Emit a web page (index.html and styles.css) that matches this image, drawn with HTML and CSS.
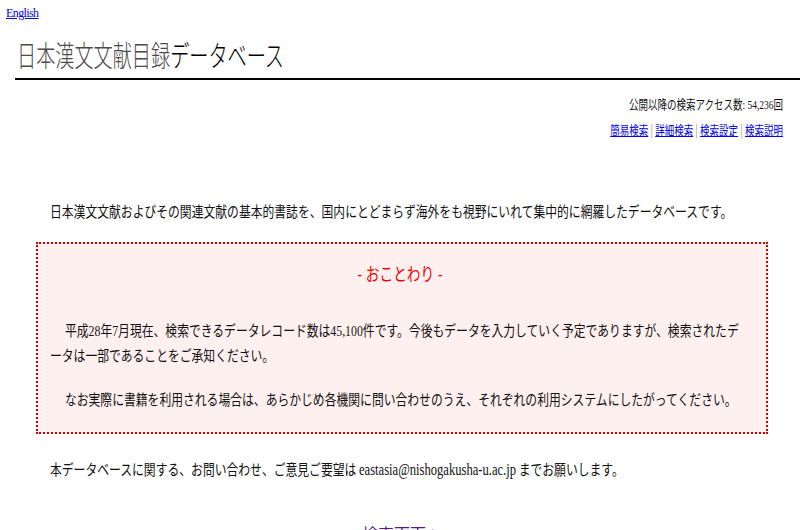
FILE: index.html
```html
<!DOCTYPE html>
<html lang="ja">
<head>
<meta charset="utf-8">
<title>日本漢文文献目録データベース</title>
<link rel="stylesheet" href="styles.css">
</head>
<body>
<div class="lang"><a href="#">English</a></div>
<header class="header">
  <h1 class="title"><span class="title-text"><span class="kanji">日本漢文文献目録</span>データベース</span></h1>
</header>
<div class="meta">
  <div class="counter">公開以降の検索アクセス数<span class="num">: 54,236</span>回</div>
  <nav class="menu">
    <a href="#">簡易検索</a><span class="sep">|</span><a href="#">詳細検索</a><span class="sep">|</span><a href="#">検索設定</a><span class="sep">|</span><a href="#">検索説明</a>
  </nav>
</div>
<main class="main">
  <p class="intro">日本漢文文献およびその関連文献の基本的書誌を、国内にとどまらず海外をも視野にいれて集中的に網羅したデータベースです。</p>
  <section class="notice">
    <h2 class="notice-title"><span class="dash">-</span>おことわり<span class="dash">-</span></h2>
    <p class="notice-text">平成<span class="num">28</span>年<span class="num">7</span>月現在、検索できるデータレコード数は<span class="num">45,100</span>件です。今後もデータを入力していく予定でありますが、検索されたデ<br>ータは一部であることをご承知ください。</p>
    <p class="notice-text second">なお実際に書籍を利用される場合は、あらかじめ各機関に問い合わせのうえ、それぞれの利用システムにしたがってください。</p>
  </section>
  <p class="contact">本データベースに関する、お問い合わせ、ご意見ご要望は <span class="mail">eastasia@nishogakusha-u.ac.jp</span> までお願いします。</p>
  <div class="enter"><a href="#" class="enter-link">－検索画面へ－</a></div>
</main>
</body>
</html>
```
FILE: styles.css
```css
html, body {
  margin: 0;
  padding: 0;
  background: #fff;
  overflow: hidden;
}
body {
  padding-top: 6px;
  font-family: "Noto Sans CJK JP", "Noto Sans", sans-serif;
  color: #111;
  width: 800px;
  height: 530px;
}
a { color: #0000ee; }
.lang {
  padding-left: 6px;
  font-family: "Liberation Serif", serif;
  font-size: 12px;
  line-height: 14px;
  letter-spacing: -0.6px;
}
.header {
  margin: 16px 0 0 15px;
  border-bottom: 2px solid #000;
}
.title {
  margin: 0;
  padding: 0 0 6px 2px;
  font-size: 29px;
  line-height: 36px;
  font-weight: 300;
  color: #000;
  white-space: nowrap;
}
.title-text {
  display: inline-block;
  transform: scaleX(0.66);
  transform-origin: 0 50%;
}
.kanji { color: #4a4a4a; }
.meta {
  margin: 14px 17px 0 0;
  text-align: right;
  font-size: 13px;
}
.counter,
.menu {
  line-height: 20px;
  white-space: nowrap;
  transform: scaleX(0.73);
  transform-origin: 100% 50%;
}
.num {
  font-family: "Liberation Serif", serif;
}
.menu { margin-top: 5px; }
.sep {
  color: #999;
  margin: 0 3px;
}
.main {
  margin: 0 32px 0 36px;
  font-size: 15px;
}
.intro,
.notice-text,
.contact {
  white-space: nowrap;
  line-height: 24px;
  transform: scaleX(0.787);
  transform-origin: 0 50%;
}
.intro { margin: 59px 0 0 14px; }
.notice {
  margin-top: 19px;
  border: 2px dotted #cc0000;
  background: #fff0f0;
  padding: 15px 16px 21px 12px;
}
.notice-title {
  margin: 0;
  text-align: center;
  font-size: 18px;
  line-height: 28px;
  font-weight: 400;
  color: #ee0000;
  transform: scaleX(0.76);
}
.dash {
  font-family: "Liberation Sans", sans-serif;
  margin: 0 5px;
}
.notice-text {
  margin: 29px 0 0;
  text-indent: 19px;
}
.notice-text.second { margin-top: 20px; }
.mail {
  font-family: "Liberation Serif", serif;
  font-size: 16px;
}
.contact { margin: 23px 0 0 14px; }
.enter {
  margin-top: 39px;
  text-align: center;
  font-size: 16px;
  line-height: 24px;
}
.enter-link {
  color: #551a8b;
  text-decoration: none;
}
```
